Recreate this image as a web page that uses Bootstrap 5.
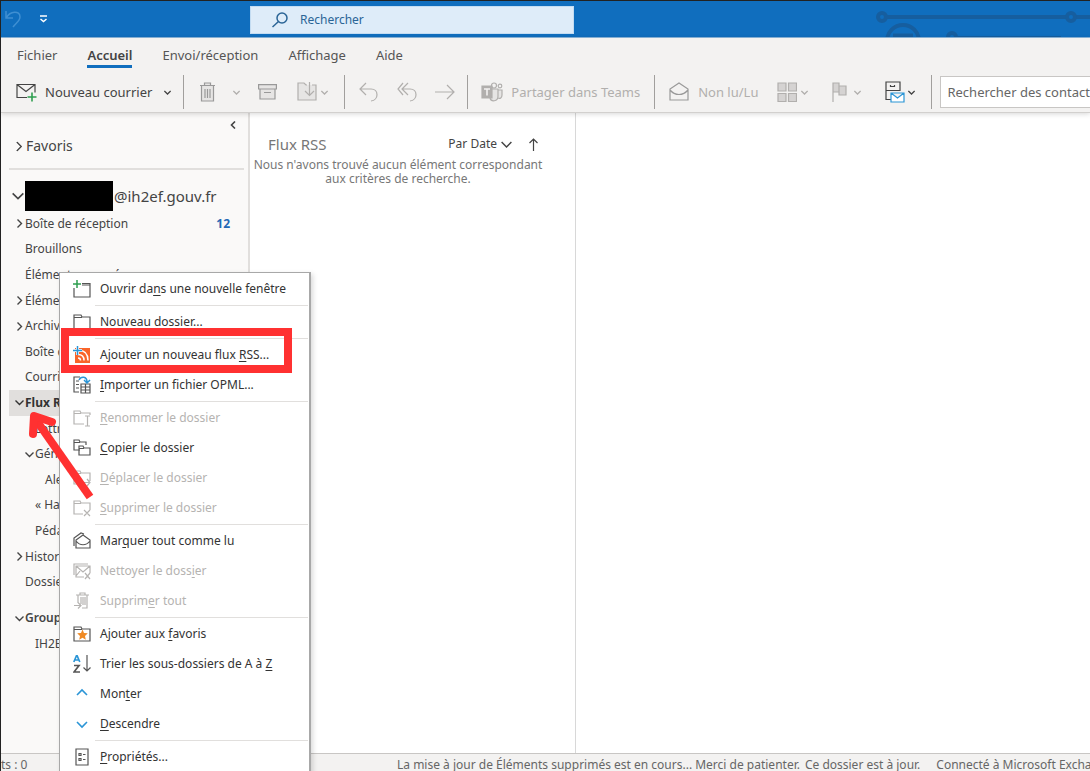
<!DOCTYPE html>
<html lang="fr">
<head>
<meta charset="utf-8">
<meta name="viewport" content="width=device-width, initial-scale=1">
<title>Flux RSS - Outlook</title>
<link href="https://cdn.jsdelivr.net/npm/bootstrap@5.3.0/dist/css/bootstrap.min.css" rel="stylesheet">
<style>
body{font-family:"Noto Sans","Open Sans",sans-serif;font-size:12px;line-height:16px;color:#444;background:#fff;border-left:1px solid #222;border-top:1px solid #222}
svg{fill:none;stroke:currentColor;stroke-width:1.2;flex:none;display:block}
button,.plain-link{border:0;background:none;padding:0;color:inherit;text-decoration:none;text-align:left}
main{min-height:0}
/* Title bar */
.titlebar{background:#106ebe;height:37px;border-bottom:1px solid #8ab6dc}
.undo{color:#3f8fd2}
.circuit{color:#165e9f}
.searchbox{left:249px;top:5px;width:324px;height:28px;background:#deecf9;color:#2a6496;border:1px solid #c3dcf2}
.searchbox svg{margin:0 4px 0 21px;stroke-width:1.5}
.searchbox input{font-size:12px;color:#2a6496}
.searchbox input::placeholder,.contact-search::placeholder{color:inherit;opacity:1}
.searchbox input,.contact-search{outline:0}
/* Ribbon */
.ribbon{background:#f3f2f1;border-bottom:1px solid #d2d0ce;box-shadow:0 1px 5px rgba(0,0,0,.16);z-index:2}
.tabs{height:36px;font-size:13px;padding-left:16px;color:#555;gap:30px}
.tabs a{height:30px;line-height:34px;border-bottom:3px solid transparent}
.tabs a.current{font-weight:600;color:#444;border-color:#106ebe}
.tools{height:38px;font-size:13px;padding:0 0 2px 15px;white-space:nowrap}
.tools .chev{stroke-width:1.6}
.divider{width:1px;height:34px;background:#a19f9d;flex:none}
.off{color:#b1afad}
.contact-search{width:260px;height:32px;border:1px solid #c8c6c4;background:#fff;color:#666;padding:0 6px;font-size:13px}
.t-new{margin-right:12px}.t-new span{margin:0 12px 0 8px}
.t-del{margin-left:15px}.t-delm{margin-left:17px}.t-arc{margin-left:18px}.t-mov{margin:0 16px 0 20px}
.t-rep{margin-left:14px}.t-repa{margin-left:19px}.t-fwd{margin:0 12px 0 18px}
.t-teams{margin:0 14px 0 13px}.t-teams span{margin-left:8px}
.t-read{margin-left:14px}.t-read span{margin-left:9px}
.t-cat{margin-left:19px}.t-flag{margin-left:24px;gap:6px}.t-rule{margin:0 16px 0 24px;gap:3px}
/* Folder pane */
.sidebar{width:249px;background:#faf9f8;border-right:2px solid #e1dfdd}
.side-top{font-size:14px;line-height:20px;padding:7px 0 12px 13px}.side-top a{margin-left:2px}
.side-rule{height:2px;background:#e1dfdd;margin:0 4px 11px 8px}
.account{font-size:15px;line-height:30px;padding-left:11px;gap:1px}
.redacted{width:88px;height:30px;background:#000}
.folders{display:grid;grid-auto-rows:1fr;height:384px}
.folder{display:flex;align-items:center;white-space:nowrap;padding-left:16px;margin-left:8px}
.folder svg{width:9px;height:9px;margin-right:1px;margin-left:-10px;stroke-width:1.4}
.folder.on{background:#e1dfdd;font-weight:700;color:#333}
.lvl1{padding-left:26px}.lvl2{padding-left:36px}
.unread{color:#2468b5;margin-right:18px}
.groups{padding-top:10px}.groups .folder{height:26px}
/* Message list */
.list-pane{width:326px;border-right:1px solid #d8d8d8}
.list-head{padding:21px 37px 4px 18px}
.list-title{font-size:15px;line-height:20px;color:#777}
.sort-btn{margin-left:17px}
.empty{font-size:12px;line-height:14px;padding-right:29px;color:#777;white-space:nowrap}
/* Context menu */
.ctx{left:58px;top:159px;width:252px;padding:1px 1px 1px 0;background:#fff;border:1px solid #a8a8a8;border-right-width:2px;box-shadow:2px 2px 5px rgba(0,0,0,.15);z-index:3;color:#333}
.ctx button{display:flex;align-items:center;width:100%;height:30px;padding-left:13px;gap:9px;white-space:nowrap}
.ctx svg{width:18px;height:18px;stroke-width:1.2;color:#555}
.ctx button:disabled,.ctx button:disabled svg{color:#b5b3b1}
.ctx .blue{color:#2b95d6}
.ctx u{text-underline-offset:2px}
.rule{height:1px;margin:1px 0 1px 35px;background:#e1dfdd}
.frame{inset:-12px 16px -3px 1px;border:8px solid #ff3131;z-index:1}
.arrow{left:24px;top:292px;z-index:4;color:#ff3131;stroke-width:8}
/* Status bar */
.statusbar{height:18px;line-height:22px;background:#f3f2f1;border-top:1px solid #c8c6c4;white-space:nowrap;color:#666;z-index:2}
.status-left{width:396px}
.status-gap{margin-left:5px}
.status-end{margin-left:16px}
</style>
</head>
<body class="d-flex flex-column vh-100 overflow-hidden">
<svg class="d-none">
<symbol id="down" viewBox="0 0 9 9"><path d="M.5 2.5 4.5 6.500 8.500 2.500"/></symbol>
<symbol id="right" viewBox="0 0 9 9"><path d="M2.500 .5 6.500 4.500 2.500 8.500"/></symbol>
<symbol id="fold" viewBox="0 0 18 18"><path d="M1 16V2h7l1 2h8v12zM1 4.500h8"/></symbol>
</svg>

<header class="titlebar position-relative flex-shrink-0 overflow-hidden">
  <div class="d-flex align-items-center gap-3 h-100">
    <button aria-label="Annuler" class="undo ms-1"><svg width="18" height="20"><path stroke-width="1.500" d="M1 2v7h7M1.500 8.500C5 2 15 1 15 8c0 4-4 6-7 10"/></svg></button>
    <button aria-label="Personnaliser" class="text-white"><svg width="9" height="8"><path stroke-width="1.500" d="M1 1h7M1.500 4 4.500 6.500 7.500 4"/></svg></button>
  </div>
  <svg class="circuit position-absolute end-0 top-0" width="215" height="37"><g stroke-width="4"><circle cx="7" cy="16" r="4"/><path d="M12 16h179M201 16h14"/><circle cx="196" cy="16" r="4"/><circle cx="28" cy="40" r="16"/><path d="M18 35h20" stroke-width="5"/><circle cx="77" cy="36" r="4"/><path d="M82 37h104"/></g></svg>
  <label class="searchbox position-absolute d-flex align-items-center">
    <svg width="16" height="16"><circle cx="10" cy="6" r="5"/><path d="M6.500 9.500.5 15"/></svg>
    <input class="border-0 bg-transparent flex-grow-1 ps-2" type="text" placeholder="Rechercher" aria-label="Rechercher">
  </label>
</header>

<div class="ribbon position-relative flex-shrink-0">
  <nav class="tabs d-flex">
    <a class="plain-link" href="#">Fichier</a><a class="plain-link current" href="#">Accueil</a><a class="plain-link" href="#">Envoi/réception</a><a class="plain-link" href="#">Affichage</a><a class="plain-link" href="#">Aide</a>
  </nav>
  <div class="tools d-flex align-items-center overflow-hidden">
    <button class="d-flex align-items-center t-new"><svg width="21" height="20"><path d="M11 15.500H1V2.500h18v8M1 2.500l9 7 9-7"/><path stroke="#2e9e4f" stroke-width="1.600" d="M16 10.500v9M11.500 15h9"/></svg><span>Nouveau courrier</span><svg class="chev" width="7" height="7"><use href="#down"/></svg></button>
    <i class="divider"></i>
    <button class="off t-del" aria-label="Supprimer" disabled><svg width="17" height="20"><path fill="#e6e5e4" stroke="#999" d="M2.500 4v15h12V4M1 3.500h15M5.500 3V1h6v2"/><path stroke="#999" d="M6 7v9M8.500 7v9M11 7v9"/></svg></button>
    <button class="off t-delm" aria-label="Options" disabled><svg class="chev" width="7" height="7"><use href="#down"/></svg></button>
    <button class="off t-arc" aria-label="Archiver" disabled><svg width="19" height="16"><path fill="#e6e5e4" stroke="#999" d="M2 5v10h15V5M.6.6h17.800V5H.6zM6 8.500h7"/></svg></button>
    <button class="off t-mov d-flex align-items-center" aria-label="Déplacer" disabled><svg width="20" height="20"><path fill="#e6e5e4" d="M10 3H9L7 1H1v17h18V3h-4"/><path d="M12.500 0v13M8 9l4.500 4.500L17 9"/></svg><svg class="chev ms-1" width="7" height="7"><use href="#down"/></svg></button>
    <i class="divider"></i>
    <button class="off t-rep" aria-label="Répondre" disabled><svg width="19" height="20"><path d="M7 1 1 7l6 6M1 7h11c8 0 8 11 0 12"/></svg></button>
    <button class="off t-repa" aria-label="Répondre à tous" disabled><svg width="20" height="20"><path d="M6 1 1 7l5 6M11 1 5 7l6 6M5 7h8c8 0 8 11 0 12"/></svg></button>
    <button class="off t-fwd" aria-label="Transférer" disabled><svg width="20" height="16"><path d="M0 8h19M12 1l7 7-7 7"/></svg></button>
    <i class="divider"></i>
    <button class="off t-teams d-flex align-items-center" disabled><svg width="22" height="20"><path fill="#e6e5e4" d="M10 7h7v7c0 6-7 6-8 2M17 8h4v5c0 3-2 4-4 3"/><circle cx="13" cy="3.500" r="2.500"/><circle cx="19" cy="4" r="1.800"/><path fill="currentColor" d="M1 4h10v12H1z"/><path stroke="#f3f2f1" stroke-width="1.600" d="M3 7h6M6 7v6.500"/></svg><span>Partager dans Teams</span></button>
    <i class="divider"></i>
    <button class="off t-read d-flex align-items-center" disabled><svg width="20" height="20"><path stroke="#999" d="M1 18V7l9-6 9 6v11zM1 8c5 6 13 6 18 0"/></svg><span>Non lu/Lu</span></button>
    <button class="off t-cat d-flex align-items-center" aria-label="Catégoriser" disabled><svg width="20" height="20"><path fill="#d5d3d2" d="M1 1h8v8H1zM11.500 1h8v8h-8zM1 11.500h8v8H1zM11.500 11.500h8v8h-8z"/></svg><svg class="chev ms-1" width="7" height="7"><use href="#down"/></svg></button>
    <button class="off t-flag d-flex align-items-center" aria-label="Suivi" disabled><svg width="16" height="20"><path fill="#d5d3d2" d="M1 20V1h6v9H1M7 4h7v9H7z"/></svg><svg class="chev" width="7" height="7"><use href="#down"/></svg></button>
    <button class="t-rule d-flex align-items-center" aria-label="Filtrer le courrier"><svg width="20" height="22"><path d="M6 18.500H1V1h14v9M1 9.500h14M5.500 4v1.500h4V4"/><path stroke="#2b95d6" fill="#fff" d="M6 12h13v9H6zM6 12l6.500 5 6.500-5"/></svg><svg class="chev" width="7" height="7"><use href="#down"/></svg></button>
    <i class="divider"></i>
    <input class="contact-search ms-2 flex-shrink-0" type="text" placeholder="Rechercher des contacts" aria-label="Rechercher des contacts">
  </div>
</div>

<main class="d-flex flex-grow-1 position-relative">
  <aside class="sidebar flex-shrink-0 overflow-hidden">
    <div class="d-flex justify-content-end pt-2 pe-2"><button class="me-1" aria-label="Réduire"><svg width="6" height="8"><path stroke-width="1.600" d="M5 .5 1.500 4 5 7.500"/></svg></button></div>
    <div class="side-top d-flex align-items-center"><svg width="10" height="11" viewBox="0 0 9 9"><use href="#right"/></svg><a class="plain-link" href="#">Favoris</a></div>
    <div class="side-rule"></div>
    <div class="account d-flex align-items-center"><svg width="12" height="12" viewBox="0 0 9 9"><use href="#down"/></svg><span class="redacted"></span><a class="plain-link" href="#">@ih2ef.gouv.fr</a></div>
    <div class="folders">
      <div class="folder"><svg><use href="#right"/></svg><a class="plain-link" href="#">Boîte de réception</a><b class="ms-auto unread">12</b></div>
      <div class="folder"><a class="plain-link" href="#">Brouillons</a></div>
      <div class="folder"><a class="plain-link" href="#">Éléments envoyés</a></div>
      <div class="folder"><svg><use href="#right"/></svg><a class="plain-link" href="#">Éléments</a></div>
      <div class="folder"><svg><use href="#right"/></svg><a class="plain-link" href="#">Archive</a></div>
      <div class="folder"><a class="plain-link" href="#">Boîte d'envoi</a></div>
      <div class="folder"><a class="plain-link" href="#">Courrier</a></div>
      <div class="folder on"><svg><use href="#down"/></svg><a class="plain-link" href="#">Flux RSS</a></div>
      <div class="folder lvl1"><a class="plain-link" href="#">Lettre</a></div>
      <div class="folder lvl1"><svg><use href="#down"/></svg><a class="plain-link" href="#">Général</a></div>
      <div class="folder lvl2"><a class="plain-link" href="#">Alertes</a></div>
      <div class="folder lvl1"><a class="plain-link" href="#">« Handicap</a></div>
      <div class="folder lvl1"><a class="plain-link" href="#">Pédagogie</a></div>
      <div class="folder"><svg><use href="#right"/></svg><a class="plain-link" href="#">Historique</a></div>
      <div class="folder"><a class="plain-link" href="#">Dossiers</a></div>
    </div>
    <div class="groups">
      <div class="folder fw-semibold"><svg><use href="#down"/></svg><a class="plain-link" href="#">Groupes</a></div>
      <div class="folder lvl1"><a class="plain-link" href="#">IH2EF</a></div>
    </div>
  </aside>

  <section class="list-pane flex-shrink-0">
    <div class="list-head d-flex align-items-center"><span class="list-title me-auto">Flux RSS</span><button class="d-flex align-items-center gap-1">Par Date <svg width="11" height="11" viewBox="0 0 9 9"><use href="#down"/></svg></button><button class="sort-btn" aria-label="Ordre de tri"><svg width="9" height="13"><path d="M4.500 13V1M.5 5l4-4 4 4"/></svg></button></div>
    <p class="empty text-center mb-0">Nous n'avons trouvé aucun élément correspondant<br>aux critères de recherche.</p>
  </section>
  <section class="flex-grow-1"></section>

  <div class="ctx position-absolute">
    <button><svg><path d="M9 3.500h8V17H1V8M9 5h8" /><path stroke="#2e9e4f" stroke-width="1.500" d="M4 0v8M0 4h8"/></svg><span>Ouvrir da<u>n</u>s une nouvelle fenêtre</span></button>
    <div class="rule"></div>
    <button><svg><use href="#fold"/></svg><span>No<u>u</u>veau dossier...</span></button>
    <div class="rule"></div>
    <div class="position-relative"><button><svg><path fill="#f9652b" stroke="none" d="M2 2h15v15H2z"/><path stroke="#fff" stroke-width="1.500" d="M5 8.500c4 0 6 2 6 6M6 4.500c6 0 9 4 9 10M5 12c2 0 2.500 1 2.500 2.500"/><path stroke="#fff" stroke-width="3" d="M4.500 0v9M0 4.500h9"/><path stroke="#2b95d6" stroke-width="1.500" d="M4.500 0v9M0 4.500h9"/></svg><span>Ajouter un nouveau flux <u>R</u>SS...</span></button><div class="frame position-absolute"></div></div>
    <button><svg><path d="M7 1H1v15h5M3 5h3M3 8.500h3M3 12h3M8 8h9v9H8zM8 11h9M8 14h9M12.500 8v9"/><path stroke="#2b95d6" stroke-width="1.500" d="M6 4c2-4 8-4 8 2M11 4l3 3 3-3"/></svg><span><u>I</u>mporter un fichier OPML...</span></button>
    <div class="rule"></div>
    <button disabled><svg><path d="M11 15H1V2h6l1 2h9v2M1 4.500h7M12 7h2.500v10H12m5-10h-2.500M17 17h-2.500"/></svg><span><u>R</u>enommer le dossier</span></button>
    <button><svg><path d="M7 11H1V1h5l1 2h6v3M1 3.500h6M6 16V7h4l1 2h6v7zM6 9.500h5"/></svg><span><u>C</u>opier le dossier</span></button>
    <button disabled><svg><path d="M9 15H1V2h6l1 2h9v8M1 4.500h7M10 13.500h7M14 10l3 3.500L14 17"/></svg><span><u>D</u>éplacer le dossier</span></button>
    <button disabled><svg><path d="M10 15H1V2h6l1 2h9v7M1 4.500h7M11 11l6 6M17 11l-6 6"/></svg><span><u>S</u>upprimer le dossier</span></button>
    <div class="rule"></div>
    <button><svg><path d="M3 16V8l7-5 7 5v8zM3 9c4 5 10 5 14 0M1 14V6l7-5 3 1"/></svg><span>Mar<u>q</u>uer tout comme lu</span></button>
    <button disabled><svg><path d="M11 15H3V4h14v7M3 4l7 6 7-6M3 14l4-5M1 13V2h14M12 11l5 6M17 11l-5 6"/></svg><span>Nettoyer le doss<u>i</u>er</span></button>
    <button disabled><svg><path d="M3 3h13M5 3v8M14 3v13H9M7 3V1h5v2M8 5v7M10 5v8M12 5v8M1 13.500h7M5 10.500l3 3-3 3"/></svg><span>Supprim<u>e</u>r tout</span></button>
    <div class="rule"></div>
    <button><svg><use href="#fold"/><path fill="#f08a24" stroke="none" d="m9.500 4.500 1.500 3.500 3.800.3-2.800 2.600.8 3.800-3.300-2-3.300 2 .8-3.800-2.800-2.600L8 8z"/></svg><span>Ajouter aux <u>f</u>avoris</span></button>
    <button><svg><path class="blue" stroke-width="1.700" d="m.8 7 3-7 3 7M2 5h4"/><path stroke-width="1.700" d="M1 10.500h5L1 17h6"/><path d="M14 0v16M10.500 12.500 14 16l3.500-3.500"/></svg><span>Trier les sous-dossiers de A à <u>Z</u></span></button>
    <button><svg class="blue"><path stroke-width="1.600" d="m4 10 5-5 5 5"/></svg><span>Mon<u>t</u>er</span></button>
    <button><svg class="blue"><path stroke-width="1.600" d="m4 7 5 5 5-5"/></svg><span><u>D</u>escendre</span></button>
    <div class="rule"></div>
    <button><svg><path d="M3 1h12v16H3zM6 5.500h2v2H6zM6 10.500h2v2H6zM10 6.500h2.500M10 11.500h2.500"/></svg><span><u>P</u>ropriétés...</span></button>
  </div>
  <svg class="arrow position-absolute" width="72" height="98"><path d="M65 92 9 12"/><path stroke-linecap="round" stroke-linejoin="round" d="M8 29 9 11 27 17"/></svg>
</main>

<footer class="statusbar d-flex flex-shrink-0 overflow-hidden"><span class="status-left flex-shrink-0">ts : 0</span><span>La mise à jour de Éléments supprimés est en cours... Merci de patienter.</span><span class="status-gap">Ce dossier est à jour.</span><span class="status-end">Connecté à Microsoft Exchange</span></footer>
</body>
</html>
